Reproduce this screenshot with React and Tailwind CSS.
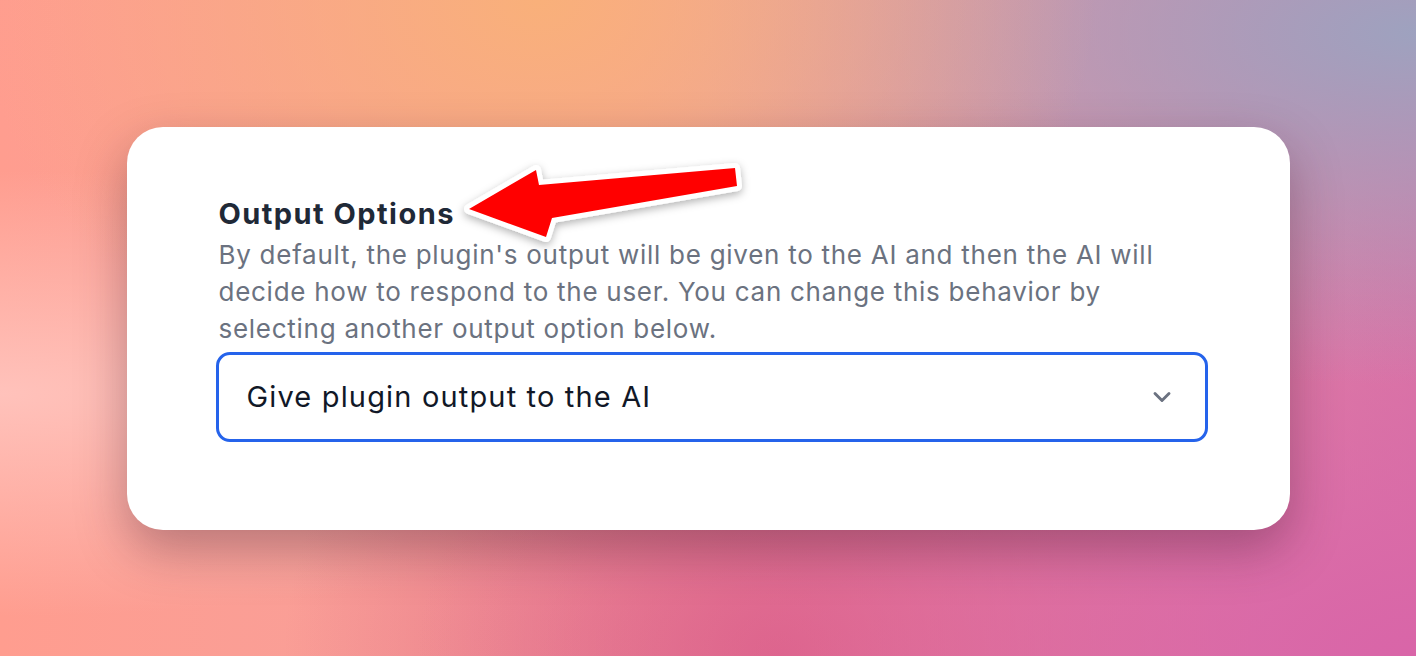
import { ChevronDown } from 'lucide-react';

const Arrow = () => (
    <svg
        className="absolute left-[320px] top-[20px] pointer-events-none"
        width="340"
        height="120"
        viewBox="320 20 340 120"
    >
        <defs>
            <filter id="arrowShadow" x="-20%" y="-40%" width="140%" height="180%">
                <feDropShadow dx="0" dy="3" stdDeviation="4" floodColor="#000" floodOpacity="0.3" />
            </filter>
        </defs>
        <polygon
            points="342,82 409,43 412,58 608,41 610,59 425,91 419,110"
            fill="#ff0000"
            stroke="#ffffff"
            strokeWidth="10"
            strokeLinejoin="round"
            paintOrder="stroke"
            filter="url(#arrowShadow)"
        />
    </svg>
);

const App = () => {
    return (
        <div className="w-full h-[656px] flex items-center justify-center overflow-hidden bg-[radial-gradient(ellipse_at_38%_0%,#f9b07a_0%,transparent_45%),radial-gradient(ellipse_at_100%_5%,#9ea2bf_0%,transparent_40%),radial-gradient(ellipse_at_100%_100%,#d965a8_0%,transparent_50%),radial-gradient(ellipse_at_55%_100%,#e0647f_0%,transparent_45%),radial-gradient(ellipse_at_0%_60%,#ffc2bb_0%,transparent_40%),linear-gradient(90deg,#ff9d8f_0%,#f3a0a0_50%,#d97aa6_100%)]">
            <div
                className="relative w-[1163px] h-[403px] rounded-[36px] bg-white pl-[92px] pr-[82px] pt-[69px] shadow-[0_20px_50px_rgba(60,20,40,0.35)]"
                style={{ fontFamily: 'Inter, "Noto Sans", sans-serif' }}
            >
                <Arrow />
                <h2 className="text-[29px] leading-[36px] font-bold tracking-[0.05em] text-[#1f2937]">Output Options</h2>
                <p className="mt-[4px] text-[26px] leading-[37px] tracking-[0.028em] text-[#6b7280] pr-[20px]">
                    By default, the plugin's output will be given to the AI and then the AI will decide how to respond to the user. You can change this behavior by selecting another output option below.
                </p>
                <button className="mt-[5px] -ml-[3px] w-[992px] h-[90px] flex items-center justify-between rounded-[14px] border-[3px] border-[#2563eb] bg-white pl-[28px] pr-[29px] text-left">
                    <span className="text-[29px] tracking-[0.04em] text-[#111827]">Give plugin output to the AI</span>
                    <ChevronDown size={28} strokeWidth={2.5} className="text-[#6b7280]" />
                </button>
            </div>
        </div>
    );
};

export default App;
